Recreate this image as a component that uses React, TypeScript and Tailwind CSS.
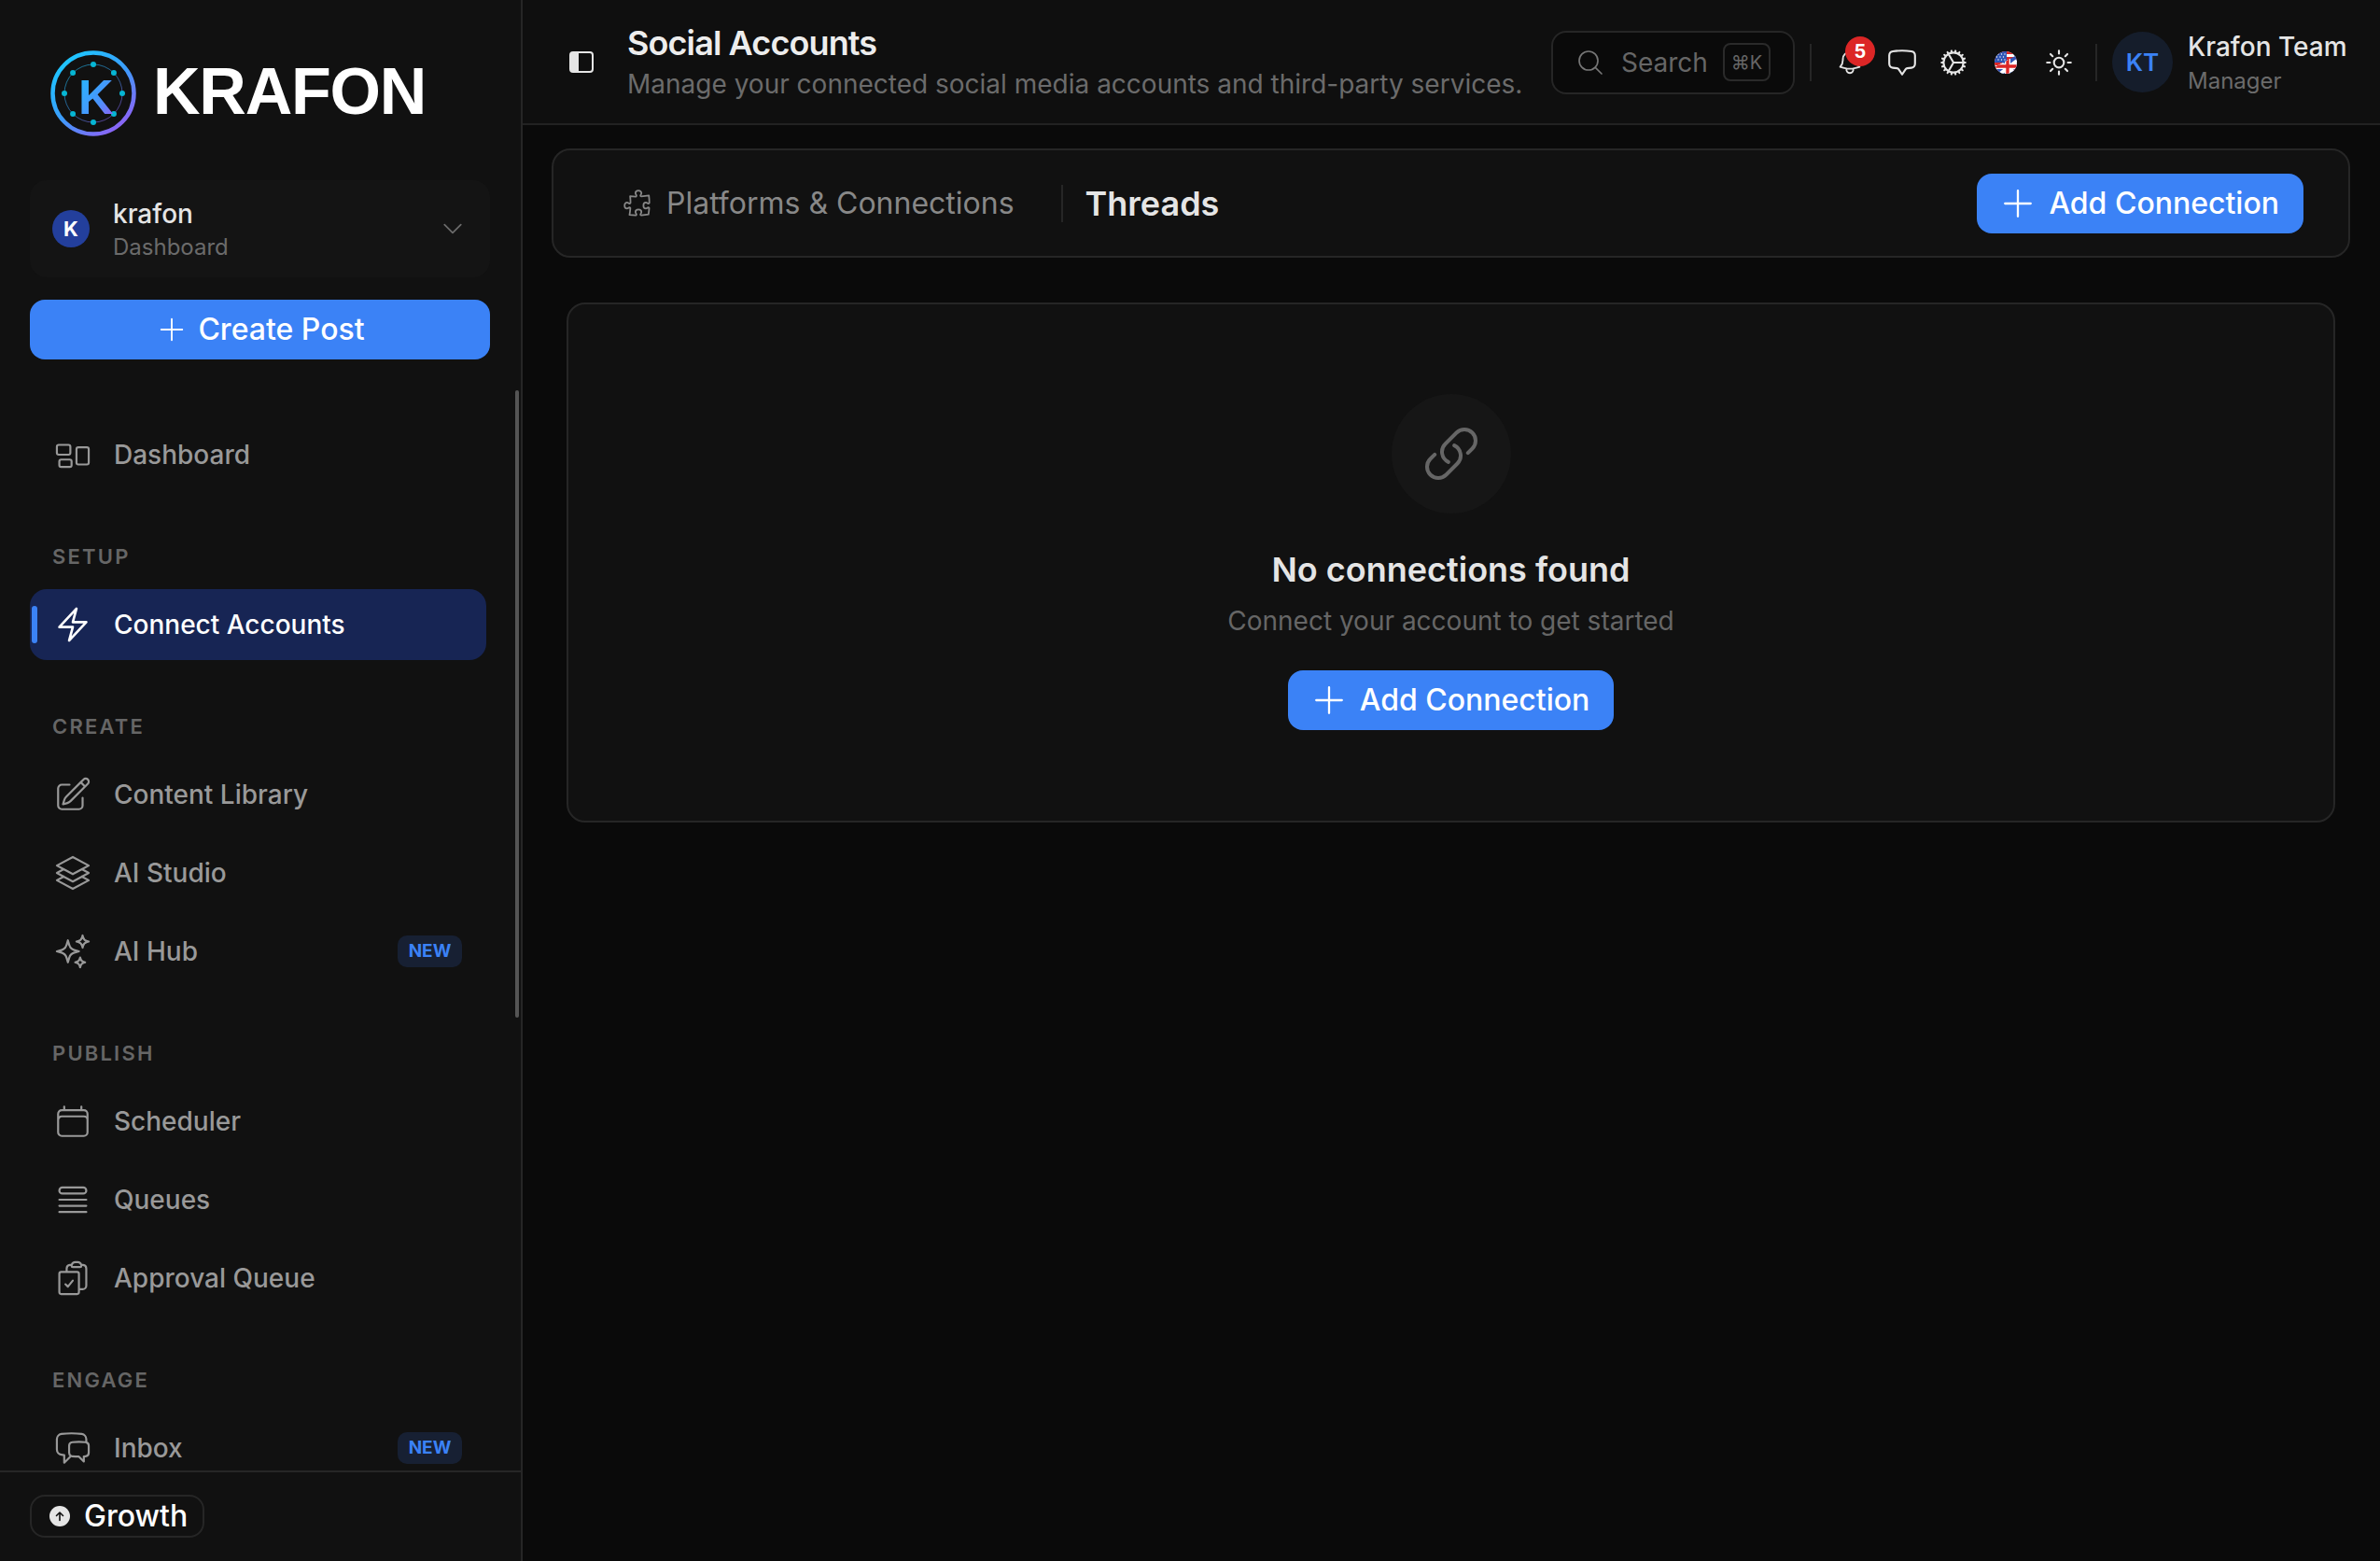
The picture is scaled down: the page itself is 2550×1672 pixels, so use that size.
import type { ReactNode } from 'react';
import {
  HiOutlineBell,
  HiOutlineBolt,
  HiOutlineCalendar,
  HiOutlineChatBubbleBottomCenter,
  HiOutlineChatBubbleLeftRight,
  HiOutlineChevronDown,
  HiOutlineClipboardDocumentCheck,
  HiOutlineCog,
  HiOutlineLink,
  HiOutlineMagnifyingGlass,
  HiOutlinePencilSquare,
  HiOutlinePlus,
  HiOutlinePuzzlePiece,
  HiOutlineQueueList,
  HiOutlineRectangleGroup,
  HiOutlineSparkles,
  HiOutlineSquare3Stack3D,
  HiOutlineSun,
} from 'react-icons/hi2';

const thin = { strokeWidth: 1.25 };

const LogoMark = () => {
  const dots = [0, 45, 90, 135, 180, 225, 270, 315];
  return (
    <svg width="92" height="92" viewBox="0 0 92 92" className="shrink-0">
      <defs>
        <linearGradient id="krafon-ring" x1="0.15" y1="0.05" x2="0.85" y2="0.95">
          <stop offset="0" stopColor="#1cc8ff" />
          <stop offset="0.5" stopColor="#3b9cfb" />
          <stop offset="1" stopColor="#9160f5" />
        </linearGradient>
        <linearGradient id="krafon-k" x1="0.1" y1="0.1" x2="0.9" y2="0.95">
          <stop offset="0" stopColor="#27b6ff" />
          <stop offset="0.6" stopColor="#4a93fb" />
          <stop offset="1" stopColor="#9160f5" />
        </linearGradient>
      </defs>
      <circle cx="46" cy="46" r="43.5" fill="none" stroke="url(#krafon-ring)" strokeWidth="4.5" />
      <circle cx="46" cy="46" r="31" fill="none" stroke="url(#krafon-ring)" strokeWidth="1" opacity="0.55" />
      {dots.map((a) => (
        <circle
          key={a}
          cx={46 + 31 * Math.cos((a * Math.PI) / 180)}
          cy={46 + 31 * Math.sin((a * Math.PI) / 180)}
          r="3"
          fill="#06b6d4"
        />
      ))}
      <text x="30" y="68" fontFamily="'Liberation Sans', sans-serif" fontWeight="700" fontSize="52" fill="url(#krafon-k)">
        K
      </text>
    </svg>
  );
};

const FlagIcon = () => (
  <svg width="24" height="24" viewBox="0 0 24 24">
    <defs>
      <clipPath id="flag-circle">
        <circle cx="12" cy="12" r="12" />
      </clipPath>
      <clipPath id="flag-uk">
        <polygon points="24,4 24,24 0,24 0,17" />
      </clipPath>
    </defs>
    <g clipPath="url(#flag-circle)">
      <rect width="24" height="24" fill="#ffffff" />
      <rect y="0" width="24" height="3" fill="#dc2626" />
      <rect y="6" width="24" height="3" fill="#dc2626" />
      <rect y="12" width="24" height="3" fill="#dc2626" />
      <rect y="18" width="24" height="3" fill="#dc2626" />
      <rect width="13" height="12" fill="#2f55b5" />
      <g fill="#ffffff">
        <circle cx="4" cy="3" r="0.7" />
        <circle cx="7.5" cy="3" r="0.7" />
        <circle cx="11" cy="3" r="0.7" />
        <circle cx="2.5" cy="6" r="0.7" />
        <circle cx="6" cy="6" r="0.7" />
        <circle cx="9.5" cy="6" r="0.7" />
        <circle cx="4" cy="9" r="0.7" />
        <circle cx="7.5" cy="9" r="0.7" />
        <circle cx="11" cy="9" r="0.7" />
      </g>
      <g clipPath="url(#flag-uk)">
        <rect width="24" height="24" fill="#2f55b5" />
        <path d="M2 10 L24 24 M24 10 L6 24" stroke="#ffffff" strokeWidth="4" />
        <path d="M0 16 H24 M14 6 V24" stroke="#ffffff" strokeWidth="6" />
        <path d="M0 16 H24 M14 6 V24" stroke="#dc2626" strokeWidth="3.4" />
      </g>
    </g>
  </svg>
);

const NavItem = ({
  icon,
  label,
  active,
  badge,
}: {
  icon: ReactNode;
  label: string;
  active?: boolean;
  badge?: boolean;
}) => (
  <div
    className={`relative flex h-[76px] shrink-0 items-center rounded-[18px] pl-[25px] pr-[26px] ${
      active ? 'bg-[#172554] text-white' : 'text-[#999999]'
    }`}
  >
    {active && <span className="absolute left-[2px] top-[18px] h-[40px] w-[6px] rounded-full bg-[#3b82f6]" />}
    <span className="flex w-[42px] shrink-0 justify-center text-[42px]">{icon}</span>
    <span className="ml-[23px] flex-1 text-[28px] font-medium leading-[40px]">{label}</span>
    {badge && (
      <span className="flex h-[34px] w-[69px] items-center justify-center rounded-[10px] bg-[#172033] text-[19px] font-bold text-[#3b82f6]">
        NEW
      </span>
    )}
  </div>
);

const SectionLabel = ({ children }: { children: ReactNode }) => (
  <div className="mb-[19px] mt-[55px] pl-[24px] text-[22px] font-semibold leading-[32px] tracking-[0.1em] text-[#666666]">
    {children}
  </div>
);

const AddButton = () => (
  <button className="flex h-[64px] items-center rounded-[16px] bg-[#3b82f6] pl-[22px] pr-[26px] text-[32px] font-medium text-white">
    <HiOutlinePlus className="text-[44px]" {...thin} />
    <span className="ml-[11px]">Add Connection</span>
  </button>
);

export default function App() {
  return (
    <div className="flex h-screen w-full overflow-hidden bg-[#0a0a0a] font-['Inter',sans-serif] antialiased">
      <aside className="relative flex h-full w-[560px] shrink-0 flex-col border-r-2 border-[#262626] bg-[#111111]">
        <div className="flex items-center pl-[54px] pt-[54px]">
          <LogoMark />
          <span className="ml-[18px] pb-[4px] font-['Liberation_Sans',sans-serif] text-[70px] font-bold leading-[88px] tracking-[-1.2px] text-white">
            KRAFON
          </span>
        </div>

        <div className="ml-[32px] mt-[47px] flex h-[104px] w-[493px] items-center rounded-[18px] bg-[#141414] pl-[24px] pr-[26px]">
          <span className="flex h-[40px] w-[40px] items-center justify-center rounded-full bg-[#233f9c] text-[22px] font-bold text-white">
            K
          </span>
          <div className="ml-[25px] flex-1 pt-[3px]">
            <div className="text-[28px] font-medium leading-[36px] text-[#e5e5e5]">krafon</div>
            <div className="text-[24px] leading-[35px] text-[#6b6b6b]">Dashboard</div>
          </div>
          <HiOutlineChevronDown className="text-[28px] text-[#6b6b6b]" />
        </div>

        <button className="ml-[32px] mt-[24px] flex h-[64px] w-[493px] shrink-0 items-center justify-center rounded-[16px] bg-[#3b82f6] text-[32px] font-medium text-white">
          <HiOutlinePlus className="text-[36px]" {...thin} />
          <span className="ml-[10px]">Create Post</span>
        </button>

        <nav className="flex min-h-0 flex-1 flex-col overflow-hidden pl-[32px] pr-[37px] pt-[64px]">
          <NavItem icon={<HiOutlineRectangleGroup {...thin} />} label="Dashboard" />
          <SectionLabel>SETUP</SectionLabel>
          <NavItem icon={<HiOutlineBolt />} label="Connect Accounts" active />
          <SectionLabel>CREATE</SectionLabel>
          <div className="flex flex-col gap-[8px]">
            <NavItem icon={<HiOutlinePencilSquare {...thin} />} label="Content Library" />
            <NavItem icon={<HiOutlineSquare3Stack3D {...thin} />} label="AI Studio" />
            <NavItem icon={<HiOutlineSparkles {...thin} />} label="AI Hub" badge />
          </div>
          <SectionLabel>PUBLISH</SectionLabel>
          <div className="flex flex-col gap-[8px]">
            <NavItem icon={<HiOutlineCalendar {...thin} />} label="Scheduler" />
            <NavItem icon={<HiOutlineQueueList {...thin} />} label="Queues" />
            <NavItem icon={<HiOutlineClipboardDocumentCheck {...thin} />} label="Approval Queue" />
          </div>
          <SectionLabel>ENGAGE</SectionLabel>
          <NavItem icon={<HiOutlineChatBubbleLeftRight {...thin} />} label="Inbox" badge />
        </nav>

        {/* scrollbar thumb */}
        <div className="absolute right-[2px] top-[418px] h-[672px] w-[4px] rounded-full bg-[#555555]" />

        <div className="h-[97px] shrink-0 border-t-2 border-[#262626] pl-[32px] pt-[24px]">
          <div className="flex h-[46px] w-[187px] items-center rounded-[16px] border-2 border-[#262626] pl-[19px]">
            <span className="flex h-[22px] w-[22px] items-center justify-center rounded-full bg-[#e5e5e5]">
              <svg width="14" height="14" viewBox="0 0 14 14" fill="none" stroke="#111111" strokeWidth="1.6" strokeLinecap="round" strokeLinejoin="round">
                <path d="M7 11.5 V3 M3.5 6.5 L7 3 L10.5 6.5" />
              </svg>
            </span>
            <span className="ml-[15px] text-[32px] font-medium leading-[40px] text-white">Growth</span>
          </div>
        </div>
      </aside>

      <main className="flex h-full min-w-0 flex-1 flex-col">
        <header className="flex h-[134px] shrink-0 items-center border-b-2 border-[#222222] bg-[#0f0f0f]">
          <svg width="26" height="23" viewBox="0 0 26 23" className="ml-[50px] shrink-0">
            <rect x="1" y="1" width="24" height="21" rx="3" fill="none" stroke="#e5e5e5" strokeWidth="2" />
            <path d="M4 1 H10 V22 H4 A3 3 0 0 1 1 19 V4 A3 3 0 0 1 4 1 Z" fill="#e5e5e5" />
          </svg>
          <div className="ml-[36px] shrink-0">
            <div className="text-[36px] font-semibold leading-[48px] tracking-[-0.025em] text-[#ededed]">Social Accounts</div>
            <div className="text-[28px] leading-[40px] text-[#6b6b6b]">
              Manage your connected social media accounts and third-party services.
            </div>
          </div>

          <div className="ml-auto flex w-[888px] shrink-0 items-center pt-[1px]">
            <div className="flex h-[68px] w-[261px] items-center rounded-[16px] border-2 border-[#262626] bg-[#0a0a0a] pl-[24px]">
              <HiOutlineMagnifyingGlass className="text-[32px] text-[#777777]" {...thin} />
              <span className="ml-[17px] text-[28px] leading-[40px] text-[#666666]">Search</span>
              <span className="ml-[16px] flex h-[41px] w-[51px] items-center justify-center rounded-[8px] border-2 border-[#2a2a2a] text-[20px] text-[#666666]">
                ⌘K
              </span>
            </div>
            <div className="ml-[16px] h-[40px] w-[2px] bg-[#262626]" />
            <div className="relative ml-[26px] flex h-[32px] w-[30px] items-center justify-center">
              <HiOutlineBell className="text-[32px] text-[#e5e5e5]" />
              <span className="absolute left-[10px] top-[-12px] flex h-[32px] w-[32px] items-center justify-center rounded-full bg-[#dc2626] text-[20px] font-bold text-white">
                5
              </span>
            </div>
            <HiOutlineChatBubbleBottomCenter className="ml-[24px] text-[34px] text-[#e5e5e5]" />
            <HiOutlineCog className="ml-[21px] text-[34px] text-[#e5e5e5]" />
            <span className="ml-[27px] flex">
              <FlagIcon />
            </span>
            <HiOutlineSun className="ml-[28px] text-[34px] text-[#e5e5e5]" />
            <div className="ml-[22px] h-[40px] w-[2px] bg-[#262626]" />
            <span className="ml-[16px] flex h-[65px] w-[65px] items-center justify-center rounded-full bg-[#151d2b] text-[26px] font-semibold text-[#3b82f6]">
              KT
            </span>
            <div className="ml-[16px] pt-[2px]">
              <div className="text-[28px] font-medium leading-[36px] text-[#e5e5e5]">Krafon Team</div>
              <div className="mt-[2px] text-[24px] leading-[34px] text-[#6b6b6b]">Manager</div>
            </div>
          </div>
        </header>

        <div className="flex flex-1 flex-col pl-[31px] pr-[32px] pt-[25px]">
          <div className="flex h-[117px] items-center rounded-[20px] border-2 border-[#262626] bg-[#111111] pl-[73px] pr-[48px]">
            <HiOutlinePuzzlePiece className="text-[34px] text-[#888888]" {...thin} />
            <span className="ml-[14px] text-[32px] leading-[44px] text-[#888888]">Platforms &amp; Connections</span>
            <span className="ml-[50px] h-[40px] w-[2px] bg-[#262626]" />
            <span className="ml-[24px] text-[36px] font-semibold leading-[44px] text-[#e5e5e5]">Threads</span>
            <div className="ml-auto">
              <AddButton />
            </div>
          </div>

          <div className="mx-[16px] mt-[48px] flex h-[557px] flex-col items-center rounded-[20px] border-2 border-[#262626] bg-[#111111] pt-[96px]">
            <div className="flex h-[128px] w-[128px] items-center justify-center rounded-full bg-[#161616]">
              <HiOutlineLink className="text-[64px] text-[#666666]" />
            </div>
            <div className="mt-[36px] text-[36px] font-semibold leading-[48px] text-[#e5e5e5]">No connections found</div>
            <div className="mt-[11px] text-[28px] leading-[40px] text-[#666666]">Connect your account to get started</div>
            <div className="mt-[33px]">
              <AddButton />
            </div>
          </div>
        </div>
      </main>
    </div>
  );
}
